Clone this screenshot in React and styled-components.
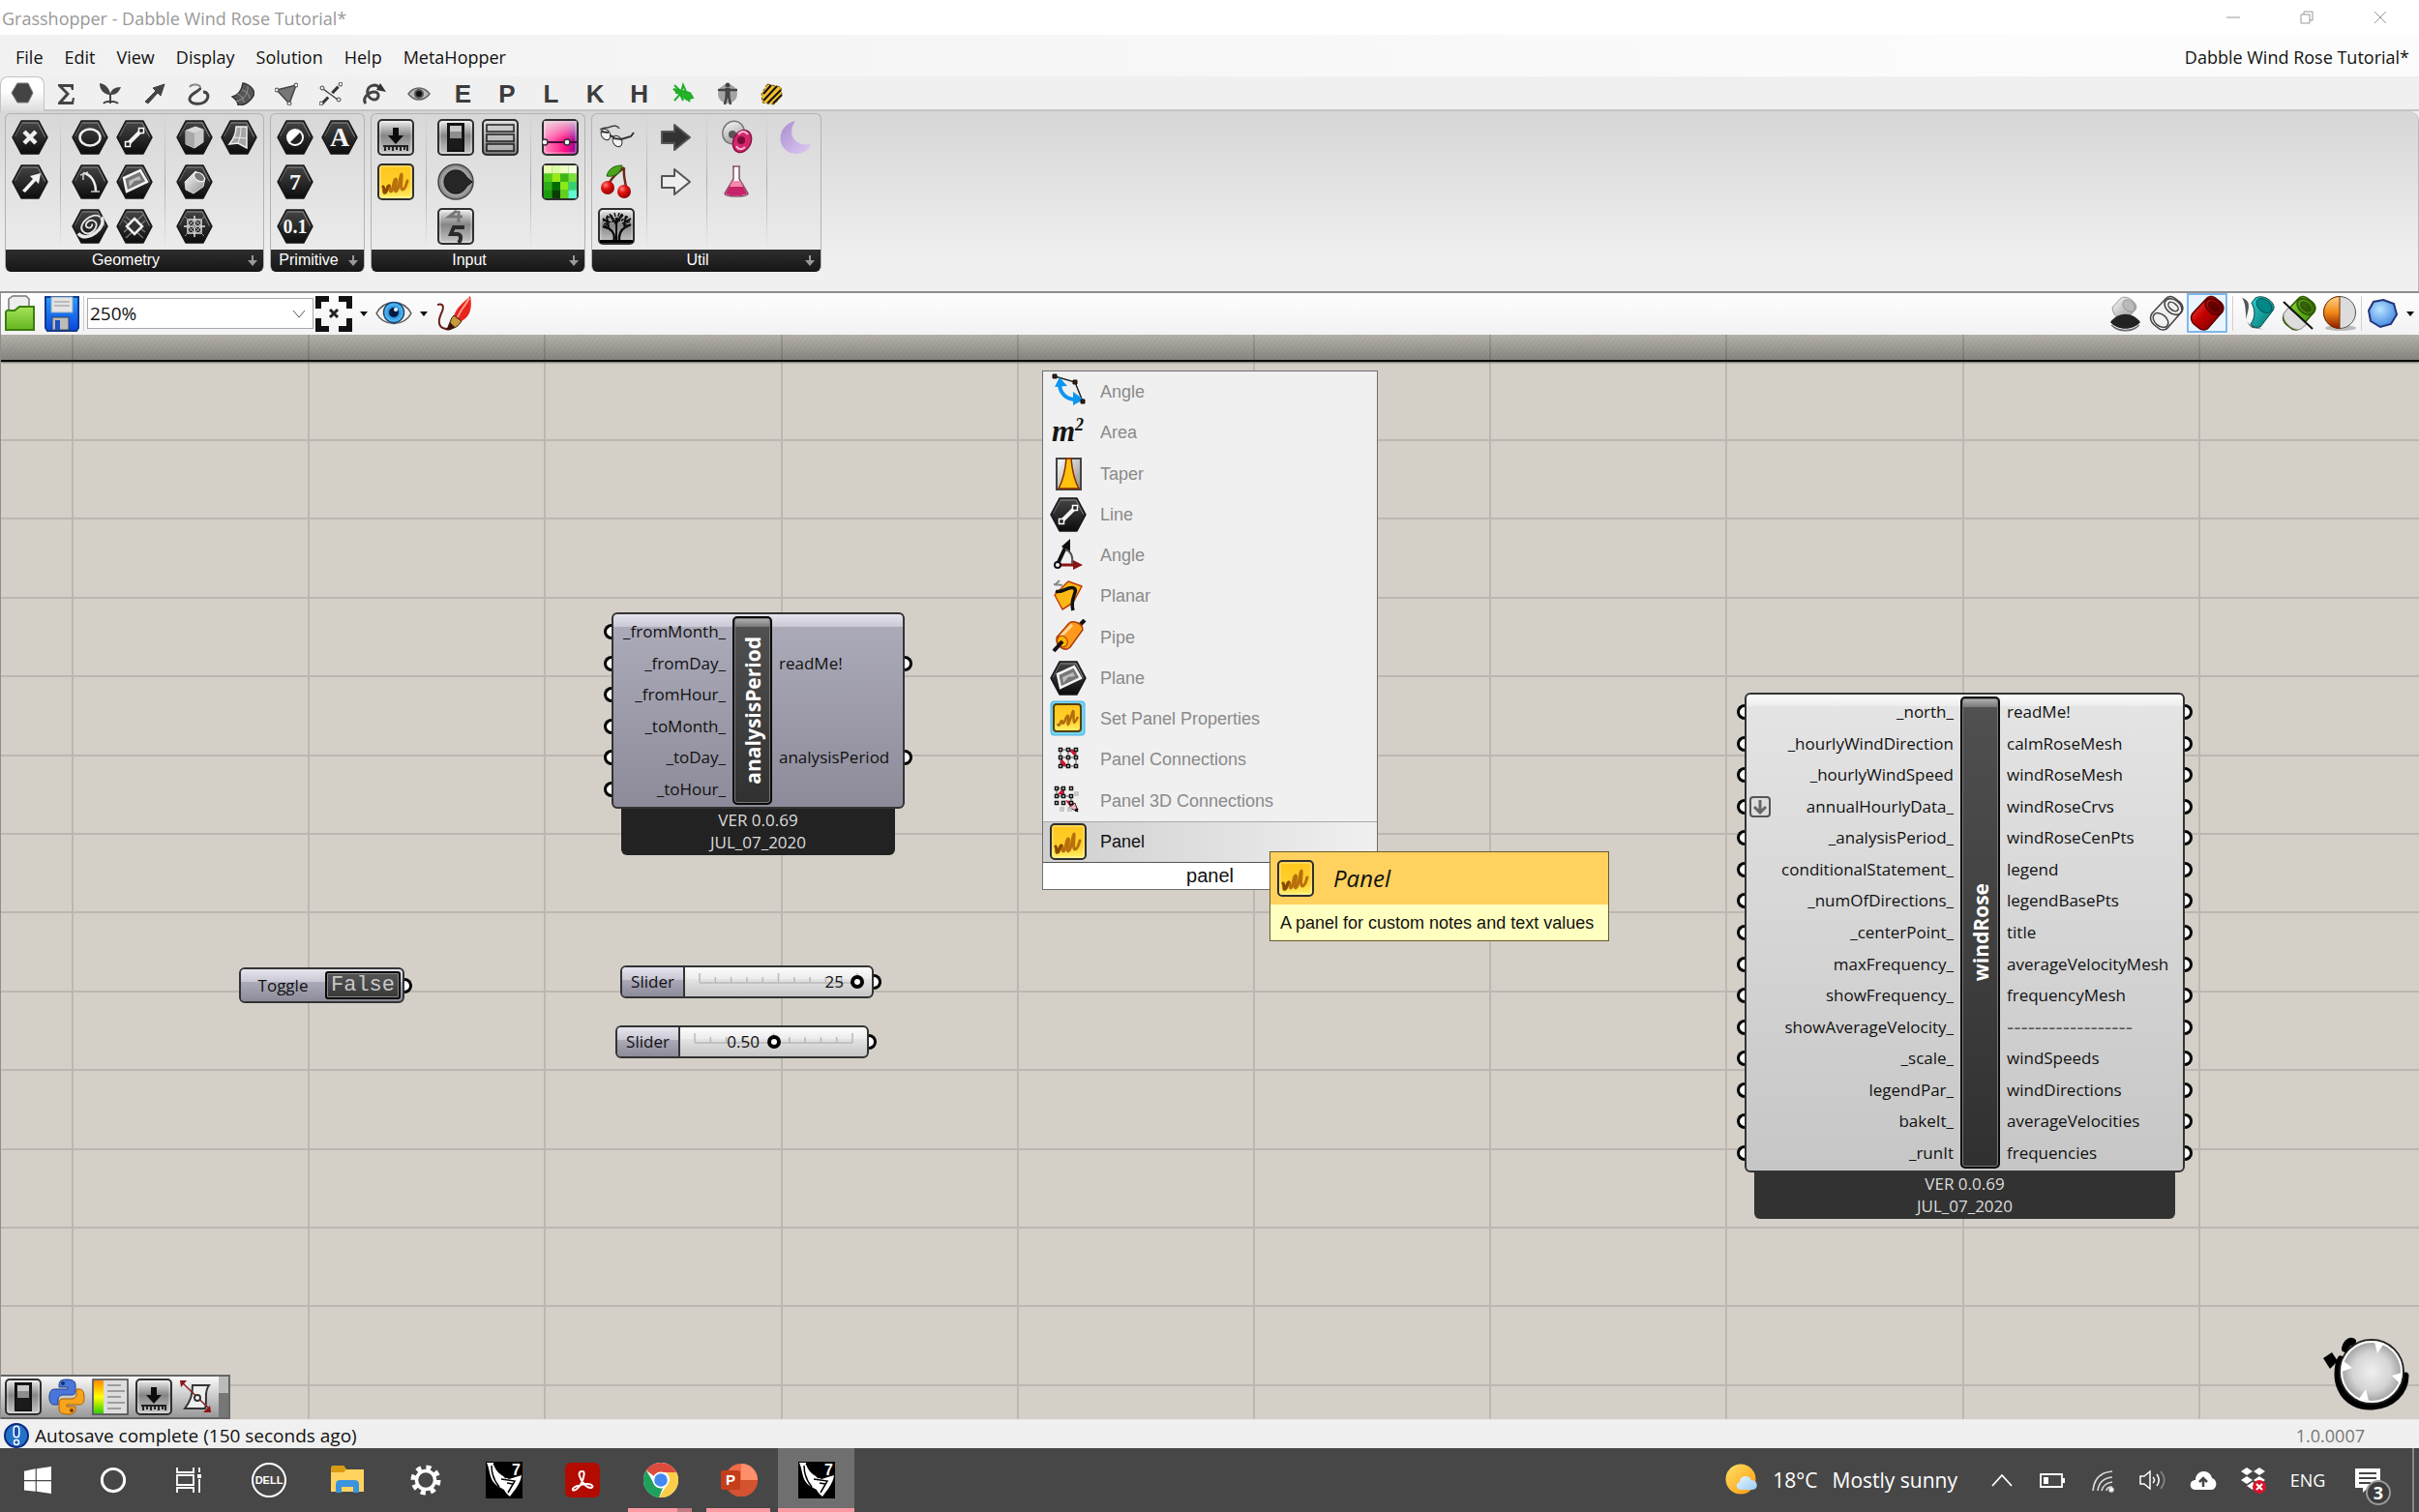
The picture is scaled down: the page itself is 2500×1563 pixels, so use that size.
import { useState } from "react"
import styled, { createGlobalStyle } from "styled-components"

const ui = `"Open Sans", "Noto Sans", sans-serif`
const sans = `"Liberation Sans", Arial, sans-serif`

/* ---------- icons ---------- */

function Svg({ size = 38, box = 38, children }) {
  return (
    <svg width={size} height={size} viewBox={`0 0 ${box} ${box}`} fill="none" aria-hidden="true">
      {children}
    </svg>
  )
}

function Defs() {
  return (
    <svg width="0" height="0" style={{ position: "absolute" }} aria-hidden="true">
      <defs>
        <linearGradient id="hex" x1="0" y1="0" x2="0" y2="1">
          <stop offset="0" stopColor="#454545" />
          <stop offset="0.5" stopColor="#2a2a2a" />
          <stop offset="1" stopColor="#0c0c0c" />
        </linearGradient>
        <linearGradient id="steel" x1="0" y1="0" x2="0" y2="1">
          <stop offset="0" stopColor="#f2f2f2" />
          <stop offset="0.45" stopColor="#858585" />
          <stop offset="1" stopColor="#c9c9c9" />
        </linearGradient>
        <linearGradient id="dim" x1="0" y1="0" x2="0" y2="1">
          <stop offset="0" stopColor="#dcdcdc" />
          <stop offset="1" stopColor="#4c4c4c" />
        </linearGradient>
        <linearGradient id="grey" x1="0" y1="0" x2="1" y2="1">
          <stop offset="0" stopColor="#ffffff" />
          <stop offset="1" stopColor="#8d8d8d" />
        </linearGradient>
        <linearGradient id="gold" x1="0" y1="0" x2="0" y2="1">
          <stop offset="0" stopColor="#ffc61c" />
          <stop offset="0.6" stopColor="#ffd02c" />
          <stop offset="1" stopColor="#fff16a" />
        </linearGradient>
        <linearGradient id="pink" x1="0" y1="0" x2="1" y2="0">
          <stop offset="0" stopColor="#ff8fc0" />
          <stop offset="0.65" stopColor="#ff0f83" />
          <stop offset="1" stopColor="#7a0a9a" />
        </linearGradient>
        <linearGradient id="shine" x1="0" y1="0" x2="0" y2="1">
          <stop offset="0" stopColor="#e6e6e6" stopOpacity="0.8" />
          <stop offset="1" stopColor="#fff" stopOpacity="0" />
        </linearGradient>
        <linearGradient id="moon" x1="0" y1="0" x2="1" y2="1">
          <stop offset="0" stopColor="#a98fd0" />
          <stop offset="1" stopColor="#dfcaf3" />
        </linearGradient>
        <linearGradient id="folder" x1="0" y1="0" x2="0" y2="1">
          <stop offset="0" stopColor="#a6e45a" />
          <stop offset="1" stopColor="#63b51e" />
        </linearGradient>
        <linearGradient id="disk" x1="0" y1="0" x2="0" y2="1">
          <stop offset="0" stopColor="#2c9bff" />
          <stop offset="1" stopColor="#0a46e0" />
        </linearGradient>
        <linearGradient id="red" x1="0" y1="0" x2="1" y2="1">
          <stop offset="0" stopColor="#ff5a4a" />
          <stop offset="0.45" stopColor="#c40000" />
          <stop offset="1" stopColor="#6a0000" />
        </linearGradient>
        <linearGradient id="teal" x1="0" y1="0" x2="1" y2="1">
          <stop offset="0" stopColor="#2ad0cc" />
          <stop offset="1" stopColor="#05706f" />
        </linearGradient>
        <linearGradient id="green" x1="0" y1="0" x2="1" y2="1">
          <stop offset="0" stopColor="#a0e83c" />
          <stop offset="1" stopColor="#2d7d00" />
        </linearGradient>
        <linearGradient id="orange" x1="0" y1="0" x2="0" y2="1">
          <stop offset="0" stopColor="#ffd28a" />
          <stop offset="0.5" stopColor="#f08a14" />
          <stop offset="1" stopColor="#8a1a00" />
        </linearGradient>
        <linearGradient id="legend" x1="0" y1="0" x2="0" y2="1">
          <stop offset="0" stopColor="#ff8a00" />
          <stop offset="0.5" stopColor="#ffff00" />
          <stop offset="1" stopColor="#34d000" />
        </linearGradient>
        <linearGradient id="sun" x1="0" y1="0" x2="1" y2="1">
          <stop offset="0" stopColor="#ffe067" />
          <stop offset="1" stopColor="#ff9a0c" />
        </linearGradient>
        <linearGradient id="cloud" x1="0" y1="0" x2="1" y2="1">
          <stop offset="0" stopColor="#e9f6ff" />
          <stop offset="1" stopColor="#9ccbf3" />
        </linearGradient>
        <radialGradient id="gem" cx="0.4" cy="0.35" r="0.7">
          <stop offset="0" stopColor="#b8e4ff" />
          <stop offset="1" stopColor="#3f83e2" />
        </radialGradient>
        <radialGradient id="iris">
          <stop offset="0.2" stopColor="#0a6fd0" />
          <stop offset="1" stopColor="#63c8f8" />
        </radialGradient>
        <radialGradient id="cherry" cx="0.35" cy="0.3" r="0.8">
          <stop offset="0" stopColor="#ff8080" />
          <stop offset="0.4" stopColor="#e00f0f" />
          <stop offset="1" stopColor="#800000" />
        </radialGradient>
        <radialGradient id="ball">
          <stop offset="0" stopColor="#f0f0f0" />
          <stop offset="0.6" stopColor="#d4d4d4" />
          <stop offset="1" stopColor="#999" />
        </radialGradient>
      </defs>
    </svg>
  )
}

function Hex({ children }) {
  return (
    <Svg>
      <path d="M10 2h18l9 17-9 17H10L1 19z" fill="url(#hex)" stroke="#161616" strokeWidth="1.5" strokeLinejoin="round" />
      <path d="M11 4h16l7.500 14.500" stroke="#8a8a8a" strokeWidth="1" />
      <path d="M11 4L3.500 18" stroke="#666" strokeWidth="1" />
      {children}
    </Svg>
  )
}

function Plate({ fill = "url(#steel)", children }) {
  return (
    <Svg>
      <rect x="1" y="1" width="36" height="36" rx="4" fill={fill} stroke="#2f2f2f" strokeWidth="2" />
      <rect x="3" y="3" width="32" height="32" rx="2" stroke="#fff" strokeOpacity="0.5" />
      {children}
    </Svg>
  )
}

const Point = () => <Hex><path d="M13 13l12 12M25 13L13 25" stroke="#eee" strokeWidth="4.500" /></Hex>
const Vector = () => <Hex><path d="M11 28L22 16l-3-3 11-3-2 11-3-3-11 12z" fill="#f2f2f2" /></Hex>
const Circle = () => <Hex><ellipse cx="19" cy="19" rx="10.500" ry="8.500" stroke="#eee" strokeWidth="2.500" /></Hex>
const Line = () => (
  <Hex>
    <path d="M12 26l14-14" stroke="#f2f2f2" strokeWidth="4" />
    <path d="M9.500 23.500h5v5h-5zM23.500 9.500h5v5h-5z" fill="#222" stroke="#fff" strokeWidth="1.500" />
  </Hex>
)
const Arc = () => (
  <Hex>
    <path d="M12 10c8 1 13 9 13 19" stroke="#eee" strokeWidth="2.500" />
    <path d="M20 29h9M12 10v7M9 12l8-3" stroke="#ccc" strokeWidth="1.500" />
  </Hex>
)
const PlaneIcon = () => (
  <Hex>
    <path d="M8 15l17-8 7 12-21 10z" fill="#777" stroke="#f4f4f4" strokeWidth="2.500" />
    <path d="M13 18l11-5 2 4-7 1-5 6z" fill="#bdbdbd" />
  </Hex>
)
const Curve = () => (
  <Hex>
    <g transform="rotate(-35 19 19)" stroke="#e6e6e6" strokeWidth="1.800">
      <path d="M5 18c0 14 29 12 29 0" strokeWidth="3.500" />
      <path d="M33 17c-2-9-24-8-23 2s18 6 16-1-12-4-10 0 6 2 6 0" />
    </g>
  </Hex>
)
const Rectangle = () => (
  <Hex>
    <path d="M8 13l20 18M30 13L10 31M10 9l20 16M28 7L8 25" stroke="#777" strokeWidth="1.500" />
    <path d="M19 11l8 8-8 8-8-8z" fill="#333" stroke="#eee" strokeWidth="2.500" />
  </Hex>
)
const Box = () => (
  <Hex>
    <path d="M10 12l10-4 8 3v13l-9 6-9-4z" fill="#8d8d8d" stroke="#ddd" />
    <path d="M10 12l10-4 8 3-9 4z" fill="#d8d8d8" />
    <path d="M10 12l9 3v15l-9-4z" fill="#a8a8a8" />
    <path d="M19 15l9-4v13l-9 6z" fill="#c8c8c8" />
  </Hex>
)
const Surface = () => (
  <Hex>
    <path d="M16 8h11v22l-9-5-9 1c5-6 7-11 7-18z" fill="#a5a5a5" stroke="#eee" strokeWidth="1.500" />
    <path d="M21 8c0 6-1 12-3 17M13 19l14 1" stroke="#eee" />
  </Hex>
)
const Brep = () => (
  <Hex>
    <path d="M9 19L20 8l10 7-2 9-10 7-8-4z" fill="url(#grey)" stroke="#ddd" />
    <ellipse cx="24" cy="14" rx="6" ry="4" transform="rotate(35 24 14)" fill="#777" stroke="#fff" />
  </Hex>
)
const Mesh = () => (
  <Hex>
    <path d="M12 12h14v14H12zM19 8v22M8 19h22" stroke="#e0e0e0" strokeWidth="1.500" />
    <path d="M9 9l20 20M29 9L9 29" stroke="#999" />
    <path d="M19 12l7 7-7 7-7-7z" stroke="#ccc" />
  </Hex>
)
const Toggle = () => (
  <Hex>
    <circle cx="19" cy="19" r="9" fill="#fff" />
    <path d="M24 14a7 7 0 0 1-10 10z" fill="#222" />
  </Hex>
)
const HexText = ({ children, size = 24 }) => (
  <Hex>
    <text x="19" y={19 + Math.round(size / 3)} textAnchor="middle" fill="#f4f4f4" fontSize={size} fontWeight="700" fontFamily='"Liberation Serif", serif'>
      {children}
    </text>
  </Hex>
)

const Import = () => (
  <Plate>
    <path d="M16 9h6v8h5l-8 9-8-9h5z" fill="#0c0c0c" />
    <path d="M6 28h26M8 28v5M12 28v4M16 28v5M20 28v4M24 28v5M28 28v4M31 28v5" stroke="#222" strokeWidth="2" />
  </Plate>
)
const SliderIcon = () => (
  <Plate>
    <rect x="11" y="5" width="16" height="28" fill="#1a1a1a" stroke="#111" strokeWidth="2" />
    <rect x="13" y="7" width="12" height="13" fill="#c8c8c8" />
    <rect x="13" y="13" width="12" height="7" fill="#8d8d8d" />
  </Plate>
)
const ValueList = () => (
  <Plate fill="url(#dim)">
    {[6, 16, 26].map((y) => (
      <rect key={y} x="5" y={y} width="28" height="7" stroke="#222" strokeWidth="1.500" fill="#d2d2d2" fillOpacity="0.7" />
    ))}
  </Plate>
)
const Knob = () => (
  <Svg>
    <circle cx="19" cy="19" r="18" fill="#8f8f8f" stroke="#444" strokeWidth="1.500" />
    <circle cx="19" cy="19" r="14.500" stroke="#b4b4b4" />
    <path d="M36 19l-6 5a12 12 0 1 1 0-10z" fill="#262626" stroke="#111" />
  </Svg>
)
const Scroller = () => (
  <Plate fill="url(#steel)">
    <path d="M20 3l-8 6h14M22 3v12" stroke="#777" strokeWidth="3" />
    <path d="M28 20H17l-3 7h7c4 1 4 5 1 9" stroke="#2a2a2a" strokeWidth="4" />
  </Plate>
)
const Scribble = () => (
  <Plate fill="url(#gold)">
    <path
      d="M6 24c2 3 0 7 2 6 2 0 2-7 4-7s0 6 2 6c3 0 2-12 5-13 2 0-2 13 0 13 4-1 4-17 6-18 1 1-2 16 1 16s4-6 5-9"
      stroke="#b9700c" strokeWidth="3" strokeLinejoin="round" strokeLinecap="round"
    />
    <path d="M6 24c2 3 0 7 2 6 2 0 2-7 4-7" stroke="#8a4a00" strokeWidth="3" strokeLinecap="round" />
  </Plate>
)
const Gradient = () => (
  <Plate fill="url(#pink)">
    <rect x="2" y="2" width="34" height="20" fill="url(#shine)" />
    <path d="M2 24h34" stroke="#4a0a3a" strokeWidth="2" />
    <circle cx="3" cy="24" r="3" fill="#fff" stroke="#333" strokeWidth="1.500" />
    <circle cx="26" cy="24" r="3" fill="#fff" stroke="#333" strokeWidth="1.500" />
  </Plate>
)
const swatches = [
  "#e9ffb0", "#dcfba6", "#edfcc0", "#f2ffe0", "#4ecb1c", "#9aea16", "#3fb514", "#7be03c",
  "#2fae16", "#056c00", "#8cea1a", "#38d070", "#1a9c0c", "#0a3d00", "#62d01c", "#5ff8d0",
]
const Swatch = () => (
  <Plate fill="#3a3">
    {swatches.map((c, i) => (
      <rect key={i} x={2 + (i % 4) * 8.5} y={2 + Math.floor(i / 4) * 8.5} width="8.500" height="8.500" fill={c} />
    ))}
  </Plate>
)
const Glasses = () => (
  <Svg>
    <path d="M2 11c4-3 7-1 11-3 4-1 7-2 9 2" stroke="#444" strokeWidth="1.500" />
    <ellipse cx="8" cy="16" rx="4.500" ry="6" transform="rotate(-30 8 16)" fill="#f4f4f4" stroke="#333" />
    <ellipse cx="20" cy="23" rx="4.500" ry="6" transform="rotate(-30 20 23)" fill="#f4f4f4" stroke="#333" />
    <path d="M12 17l5 2M24 21l10-3 3-4M3 13l8 1M16 20l9 1" stroke="#333" strokeWidth="2" />
  </Svg>
)
const Cherry = () => (
  <Svg>
    <path d="M27 4c-5 5-13 9-16 18M27 4c-1 8 1 14 2 20" stroke="#6a2a1a" strokeWidth="2.500" />
    <path d="M9 13c2-8 8-11 16-11-2 9-8 12-16 11z" fill="#4aa51a" stroke="#23600a" />
    <circle cx="10" cy="25" r="7" fill="url(#cherry)" />
    <circle cx="27" cy="29" r="7" fill="url(#cherry)" />
  </Svg>
)
const Tree = () => (
  <Plate fill="url(#steel)">
    <path d="M16 35c2-6 1-10-5-14l-6-2M22 35c-1-8 1-12 6-15l6-3" stroke="#0a0a0a" strokeWidth="2.500" />
    <path d="M19 34V10M11 20L9 9M27 19l2-11M19 17l-6-10M19 16l6-10M9 14l-4-3M29 14l5-3" stroke="#0a0a0a" strokeWidth="2" />
    <path
      d="M5 13h6M6 17l7-3M12 6l3 6M9 8l5 3M17 5l2 8M22 5l-3 9M26 7l-4 6M31 9l-7 4M33 14l-8 2M7 20l4-5M31 19l-5-4M14 14l9-1"
      stroke="#111" strokeWidth="1.500" strokeDasharray="4 1"
    />
    <path d="M2 33h34v3H2z" fill="#000" />
  </Plate>
)
const ArrowBlock = ({ fill }) => (
  <Svg><path d="M4 13h13V6l16 13-16 13v-7H4z" fill={fill} stroke="#555" strokeWidth="2" strokeLinejoin="round" /></Svg>
)
const Cells = () => (
  <Svg>
    <ellipse cx="16" cy="14" rx="11" ry="12" transform="rotate(25 16 14)" fill="url(#grey)" stroke="#777" strokeWidth="1.500" />
    <circle cx="15" cy="16" r="4" fill="#555" />
    <ellipse cx="25" cy="23" rx="9" ry="12" transform="rotate(25 25 23)" fill="#d1276d" stroke="#8a1444" strokeWidth="1.500" />
    <circle cx="24" cy="22" r="4" fill="#7a0c38" />
    <path d="M21 16c3-4 7-4 10 0M19 28c2 4 6 4 9 1" stroke="#ffb5d0" strokeWidth="2" />
  </Svg>
)
const Flask = () => (
  <Svg>
    <path d="M15 3h8M16 3v13L7 31c0 4 24 4 24 0l-9-15V3" fill="#fff" stroke="#84506a" strokeWidth="1.500" />
    <path d="M14 20h10l6 11c0 3-22 3-22 0z" fill="#c8226a" />
    <path d="M15 18h8l3 6H12z" fill="#f58aab" />
  </Svg>
)
const Moon = () => (
  <Svg><path d="M18 2C1 5-3 27 11 34c10 5 21 0 23-8-15 3-26-9-16-24z" fill="url(#moon)" /></Svg>
)

/* category tabs, drawn on a 24px box */
const catPaths = [
  <path d="M7 1h11l5 10-5 10H7L1 11z" fill="#444" stroke="#777" />,
  <path d="M4 2h16v6h-2l-1-3H9l7 7-7 8h9l1-4h2l-1 7H4v-2l8-9-8-8z" fill="#444" />,
  <g>
    <path d="M11 21v-8C5 12 1 8 1 1c6 1 10 5 11 11 1-4 4-7 11-7-2 5-5 8-10 8v8z" fill="#444" />
    <path d="M5 22c2-3 12-3 15 0M12 13v9" stroke="#444" strokeWidth="2" />
  </g>,
  <path d="M3 20L14 9l-3-3 12-4-4 12-3-3L6 22z" fill="#444" stroke="#444" />,
  <g>
    <path d="M3 5c2-4 12-3 11 1" stroke="#888" strokeWidth="2" />
    <path d="M14 6c-1 4-12 6-11 12 1 5 12 6 17 1 4-5 1-9-3-9" stroke="#444" strokeWidth="3" />
  </g>,
  <g>
    <path d="M12 1c7 1 11 6 12 11-3 6-8 12-17 12 0-4-3-7-6-9 7-2 10-7 11-14z" fill="#555" stroke="#333" strokeWidth="1.500" />
    <path d="M6 12c4 1 6 4 7 9M11 8c4 1 8 5 8 9M17 4c1 6-3 14-12 16" stroke="#999" />
  </g>,
  <g>
    <path d="M2 8l20-5-7 19z" fill="#777" stroke="#444" strokeWidth="1.500" />
    <circle cx="2" cy="8" r="2" fill="#eee" stroke="#444" /><circle cx="22" cy="3" r="2" fill="#eee" stroke="#444" />
    <circle cx="15" cy="22" r="2" fill="#eee" stroke="#444" />
  </g>,
  <g>
    <path d="M3 22L22 2" stroke="#333" strokeWidth="3" strokeDasharray="9 6" />
    <path d="M4 7l15 11" stroke="#444" strokeWidth="1.500" />
    <circle cx="3" cy="6" r="2" fill="#eee" stroke="#444" /><circle cx="22" cy="2" r="2" fill="#eee" stroke="#444" />
    <circle cx="2" cy="22" r="2" fill="#eee" stroke="#444" /><circle cx="20" cy="18" r="2" fill="#eee" stroke="#444" />
  </g>,
  <g>
    <path d="M3 22c-4-5 2-12 9-12 6 0 5 9-1 8C4 17 1 4 12 3c3 0 4 1 5 3" stroke="#444" strokeWidth="3" />
    <path d="M14 8l4-7 6 9z" fill="#333" />
  </g>,
  <g>
    <path d="M1 12c6-8 16-8 22 0-6 8-16 8-22 0z" fill="#bbb" stroke="#666" strokeWidth="1.500" />
    <circle cx="12" cy="12" r="5" fill="#555" /><circle cx="12" cy="12" r="3" fill="#111" />
  </g>,
]
const catNames = ["Params", "Maths", "Sets", "Vector", "Curve", "Surface", "Mesh", "Intersect", "Transform", "Display"]
const letterTabs = ["E", "P", "L", "K", "H"]
const pluginTabs = [
  <g stroke="#1fae28" strokeWidth="2">
    <path d="M2 7l9 2 8 2 3 5-6 2-7-5z" fill="#28b428" />
    <path d="M3 3l7 7 2-7 4 9M3 19l6-7 3 7M16 17l3 3M4 11h6" />
  </g>,
  <g>
    <circle cx="12" cy="12" r="10" fill="#a4a4a4" />
    <circle cx="12" cy="3" r="2.500" fill="#444" />
    <path d="M2 8h20" stroke="#444" strokeWidth="2.500" /><path d="M12 6v9" stroke="#444" strokeWidth="5" />
    <path d="M11 14l-2 9M13 14l2 9" stroke="#444" strokeWidth="2.500" />
  </g>,
  <g>
    <path d="M8 2l14 3 1 9-8 9-12-2-1-9z" fill="#f0bd2e" />
    <path d="M4 12l8-9M4 19L18 4M8 22L22 8M14 22l9-9" stroke="#111" strokeWidth="2" />
    <path d="M8 2l14 3 1 9-8 9-12-2-1-9z" stroke="#6a5210" strokeDasharray="3 2" />
  </g>,
]

/* file toolbar */
const OpenIcon = () => (
  <Svg>
    <path d="M6 22V4l4-3h14l3 3v18z" fill="#eee" stroke="#777" strokeWidth="1.500" />
    <path d="M3 18c0-3 3-2 9-2l5-4h15v24H3z" fill="url(#folder)" stroke="#3c7d10" strokeWidth="2" />
  </Svg>
)
const SaveIcon = () => (
  <Svg>
    <path d="M2 2h34v32l-2 3H4l-2-3z" fill="url(#disk)" stroke="#123a8a" strokeWidth="2" />
    <rect x="8" y="2" width="22" height="16" fill="#e4e4e4" stroke="#8ab" />
    <path d="M11 7h16M11 11h16" stroke="#bbb" strokeWidth="2" />
    <rect x="9" y="23" width="17" height="13" fill="#bbb" stroke="#345" />
    <rect x="12" y="26" width="5" height="10" fill="#1c4fc0" />
  </Svg>
)
const ExtentsIcon = () => (
  <Svg>
    <path d="M3 14V4h11M24 4h11v10M35 24v11H24M14 35H3V24" stroke="#111" strokeWidth="6" />
    <path d="M15 15l8 8M23 15l-8 8" stroke="#222" strokeWidth="3" />
  </Svg>
)
const EyeIcon = () => (
  <Svg>
    <path d="M1 19C9 4 29 4 37 19 29 33 9 33 1 19z" fill="#f6f2ea" stroke="#555" strokeWidth="1.500" />
    <circle cx="19" cy="18" r="10.500" fill="url(#iris)" stroke="#1a4a80" strokeWidth="1.500" />
    <circle cx="19" cy="18" r="5" fill="#061a40" /><circle cx="21" cy="15" r="2" fill="#fff" />
  </Svg>
)
const BrushIcon = () => (
  <Svg>
    <path d="M2 10c7-2 7 3 4 9-4 9-3 16 7 16" stroke="#6a2018" strokeWidth="2" />
    <path d="M36 1c2 10 1 21-9 26l-8-5C22 12 29 8 36 1z" fill="#e8251c" />
    <path d="M35 3c-4 8-9 12-12 20" stroke="#ff9a8a" strokeWidth="2" />
    <path d="M19 21l8 6c-3 5-7 8-14 8 2-5 2-10 6-14z" fill="#c79a3a" stroke="#3a1a0a" />
    <path d="M10 36c3-1 3-6 5-8l5 5c-3 3-6 4-10 3z" fill="#3a1208" />
  </Svg>
)
function Tube({ fill, stroke, wire }) {
  return (
    <g stroke={stroke} strokeWidth="1.500">
      <path d="M4 19L18 4c3-4 8-3 12 1 6 4 7 8 5 12L21 33c-3 4-8 4-12 0-6-4-8-9-5-14z" fill={fill} />
      <ellipse cx="26" cy="12" rx="10" ry="7" transform="rotate(40 26 12)" fill={wire ? "none" : "#000"} fillOpacity="0.250" />
      <ellipse cx="26" cy="12" rx="6" ry="3.500" transform="rotate(40 26 12)" fill={wire ? "none" : "#000"} fillOpacity="0.300" />
      {wire && <ellipse cx="13" cy="26" rx="9" ry="6" transform="rotate(40 13 26)" />}
    </g>
  )
}
const HiddenIcon = () => (
  <Svg>
    <path d="M5 13l8-9c3-3 8-2 12 1s6 7 4 10l-8 9c-8 2-15-1-16-11z" fill="url(#grey)" stroke="#999" />
    <ellipse cx="22" cy="11" rx="7" ry="5" transform="rotate(40 22 11)" fill="#bbb" stroke="#999" />
    <path d="M3 28c8-11 23-11 31 0-7 9-24 9-31 0z" fill="#222" />
    <path d="M4 31c8 7 21 7 29 0-6 8-23 8-29 0z" fill="#eee" stroke="#555" />
  </Svg>
)
const HalfBall = () => (
  <Svg>
    <ellipse cx="20" cy="34" rx="16" ry="3" fill="#bbb" />
    <circle cx="19" cy="18" r="16.500" fill="#dcdcdc" stroke="#555" />
    <path d="M19 1.500v33a16.500 16.500 0 0 1 0-33z" fill="url(#orange)" stroke="#7a2a00" />
  </Svg>
)
const Gem = () => (
  <Svg>
    <path d="M19 5l11 4 3 11-6 10-11 3-10-6-2-11 5-9z" fill="url(#gem)" stroke="#22347c" strokeWidth="2" />
  </Svg>
)

/* canvas search popup */
const AngleArc = () => (
  <Svg>
    <path d="M5 3l21 6 8 20" stroke="#222" strokeWidth="1.500" />
    <path d="M10 12c1 8 6 14 15 15" stroke="#0d96f2" strokeWidth="4" />
    <path d="M5 14l5-10 8 9zM24 19l11 8-11 6z" fill="#0d96f2" />
    <path d="M3 1h4v4H3zM24 7h4v4h-4zM32 27h4v4h-4z" fill="#3a1a0a" stroke="#111" />
  </Svg>
)
const AreaIcon = () => (
  <Svg>
    <text x="2" y="28" fontSize="31" fontWeight="700" fontStyle="italic" fill="#141414" fontFamily='"Liberation Serif", serif'>m</text>
    <text x="26" y="17" fontSize="18" fontWeight="700" fontStyle="italic" fill="#141414" fontFamily='"Liberation Serif", serif'>2</text>
  </Svg>
)
const TaperIcon = () => (
  <Svg>
    <rect x="7" y="3" width="25" height="32" fill="url(#grey)" stroke="#444" strokeWidth="2" />
    <path d="M17 3h5c1 12 3 22 8 31H9c5-9 7-19 8-31z" fill="#ffc20e" stroke="#8a2a00" strokeWidth="1.500" />
  </Svg>
)
const AngleVec = () => (
  <Svg>
    <path d="M8 28L16 11" stroke="#111" strokeWidth="4" /><path d="M12 10l9-8v14z" fill="#111" />
    <path d="M8 29h16" stroke="#8a1414" strokeWidth="3" /><path d="M24 24l10 5-10 5z" fill="#8a1414" />
    <path d="M16 13c6 2 8 8 7 15" stroke="#555" strokeWidth="2" />
    <circle cx="8" cy="29" r="3" fill="#fff" stroke="#111" strokeWidth="2" />
  </Svg>
)
const PlanarIcon = () => (
  <Svg>
    <path d="M5 18L19 4l14 5-9 17-11 7z" fill="#fdb913" stroke="#c03c0c" strokeWidth="1.500" strokeLinejoin="round" />
    <path d="M6 14c7 3 13-6 19-3 5 3-5 10-1 23" stroke="#111" strokeWidth="3.500" />
    <path d="M5 8l5-5M4 7l9 1" stroke="#888" strokeWidth="2" />
  </Svg>
)
const PipeIcon = () => (
  <Svg>
    <path d="M28 9l8-8" stroke="#111" strokeWidth="4" />
    <path d="M7 19L20 4c4-3 14 0 14 7L21 29c-5 5-15 0-14-10z" fill="#fd9a1c" stroke="#b03a0a" strokeWidth="1.500" />
    <path d="M11 18L23 6" stroke="#ffd99a" strokeWidth="3" />
    <ellipse cx="13" cy="23" rx="5" ry="6" transform="rotate(-30 13 23)" fill="#ffb400" stroke="#a83a0a" />
    <path d="M4 33l9-10" stroke="#111" strokeWidth="4" />
  </Svg>
)
const PanelProps = () => (
  <Svg>
    <rect x="1" y="1" width="35" height="35" rx="3" fill="#74d3f6" stroke="#49b4dd" />
    <rect x="4" y="4" width="28" height="28" rx="3" fill="url(#gold)" stroke="#55400a" strokeWidth="2" />
    <path d="M8 24c1 3 2 2 3-1s2-2 2 0 2 0 3-3 3-6 3-3-1 8 0 8 4-13 5-14 0 12 1 12 3-4 4-6" stroke="#b06c0c" strokeWidth="2.500" />
  </Svg>
)
const dots = [[11, 9], [19, 9], [27, 9], [11, 17], [19, 17], [27, 17], [11, 26], [19, 26], [27, 26]]
const Connections = () => (
  <Svg>
    <path d="M19 9l8 8v-8M11 17l8 9h-8z" fill="#d8142c" />
    <path d="M11 9h16v17H11zM19 9v17M11 17h16" stroke="#555" />
    {dots.map(([x, y]) => <rect key={x + "-" + y} x={x - 1.5} y={y - 1.5} width="3" height="3" fill="#fff" stroke="#111" strokeWidth="1.500" />)}
  </Svg>
)
const dots3d = [[7, 6], [14, 6], [22, 6], [7, 14], [14, 14], [22, 14], [7, 21], [14, 21], [22, 21]]
const Connections3D = () => (
  <Svg>
    <path d="M8 12l7-8v9zM16 18l8 2 6 8-9-3z" fill="#d8142c" />
    <path d="M20 26l9 4-3-9z" fill="#f5b5bd" stroke="#333" />
    <path d="M7 6h7v8H7zM14 14h8v7" stroke="#555" />
    {dots3d.map(([x, y]) => (
      <rect key={x + "-" + y} x={x - 1.5} y={y - 1.5} width="3" height="3" fill="#fff" stroke="#111" strokeWidth="1.500" />
    ))}
    <path d="M26 10h3v3h-3zM11 26h3v3h-3zM19 26h3v3h-3z" stroke="#bbb" strokeWidth="1.500" />
    <path d="M26 27h3v3h-3z" fill="#111" />
  </Svg>
)

/* docked canvas buttons */
const Python = () => (
  <Svg>
    <path d="M19 1c-8 0-8 3-8 8h9v2H7c-5 0-6 4-6 8s1 8 5 8h4v-5c0-3 2-5 5-5h9c3 0 4-2 4-4V7c0-5-4-6-9-6z" fill="#4a76dc" stroke="#20408c" />
    <path d="M20 37c8 0 8-3 8-8h-9v-2h13c5 0 5-4 5-8s-1-8-5-8h-3v5c0 3-2 5-5 5h-9c-3 0-4 2-4 4v6c0 5 4 6 9 6z" fill="#f7a51c" stroke="#a85e04" />
    <circle cx="15" cy="5" r="2" fill="#16306a" /><circle cx="24" cy="33" r="2" fill="#7a3a00" />
  </Svg>
)
const LegendIcon = () => (
  <Svg>
    <rect x="1" y="1" width="36" height="36" fill="#ddd" stroke="#444" strokeWidth="1.500" />
    <rect x="2" y="2" width="10" height="34" fill="url(#legend)" />
    <path d="M16 7h14M16 13h18M16 19h14M16 25h18M16 31h14" stroke="#888" strokeWidth="1.500" />
  </Svg>
)
const Flow = () => (
  <Svg>
    <path d="M14 7h17c-6 8-1 14-4 24H6c6-8 8-14 8-24z" fill="#eee" stroke="#333" strokeWidth="2" />
    <path d="M3 4l29 28" stroke="#8a2020" strokeWidth="1.500" />
    <path d="M1 2h7L2 9zM33 35h-8l7-7z" fill="#8a1414" />
    <circle cx="19" cy="20" r="3" fill="#fff" stroke="#333" strokeWidth="2" />
  </Svg>
)

/* taskbar */
const Windows = () => (
  <Svg size={28} box={24}><path d="M0 4l10-2v10H0zM11 2l13-2v12H11zM0 13h10v9L0 21zM11 13h13v11l-13-2z" fill="#fff" /></Svg>
)
const Cortana = () => <Svg size={28} box={24}><circle cx="12" cy="12" r="10" stroke="#fff" strokeWidth="2.500" /></Svg>
const TaskView = () => (
  <Svg size={28} box={28}>
    <path d="M2 1v5h17V1M2 27v-5h17v5M2 9h17v10H2zM25 1v5M25 13v14" stroke="#fff" strokeWidth="1.800" />
    <rect x="23" y="8" width="4" height="4" fill="#fff" />
  </Svg>
)
const Dell = () => (
  <Svg size={38}>
    <circle cx="19" cy="19" r="17" stroke="#fff" strokeWidth="2" />
    <text x="19" y="23" textAnchor="middle" fontSize="11" fontWeight="700" fill="#fff" fontFamily="Liberation Sans, sans-serif">DELL</text>
  </Svg>
)
const Explorer = () => (
  <Svg size={36} box={36}>
    <path d="M1 5l2-2h11l3 4h18v23H1z" fill="#ffd45e" /><path d="M1 5l2-2h11l3 4-3 3H1z" fill="#d99b12" />
    <path d="M6 31V22c0-3 2-4 4-4h16c2 0 4 1 4 4v9h-6v-6H12v6z" fill="#3a94dd" />
  </Svg>
)
const Gear = () => (
  <Svg size={32} box={32}>
    <circle cx="16" cy="16" r="13" stroke="#fff" strokeWidth="5" strokeDasharray="5.100 5.110" />
    <circle cx="16" cy="16" r="9.500" stroke="#fff" strokeWidth="3.500" />
  </Svg>
)
const Rhino = () => (
  <Svg size={38}>
    <path d="M0 0h38v38H0z" fill="#000" />
    <path d="M1 1h7c1 8 7 13 16 17l13-4c-1 8-6 14-12 22-3-2-5-5-6-7l-7-4C3 19 5 9 1 1z" fill="#fff" />
    <path d="M8 2l13 15M6 4c0 9 3 16 8 22M16 18l14 2-7 12M22 22l6 1" stroke="#000" strokeWidth="1.500" />
    <path d="M2 28l12 3 8 6H2z" fill="#000" />
    <text x="27" y="14" fontSize="16" fontWeight="700" fill="#fff" fontFamily="Liberation Sans, sans-serif">7</text>
  </Svg>
)
const Acrobat = () => (
  <Svg size={38}>
    <rect x="1" y="1" width="36" height="36" rx="6" fill="#b30b00" />
    <path d="M18 10c4-1 3 5 0 12-3 6-8 9-9 7-1-3 9-6 15-6 5 0 7 3 4 4-4 1-10-6-12-12-1-3 0-5 2-5z" stroke="#fff" strokeWidth="2" />
  </Svg>
)
const Chrome = () => (
  <Svg size={36} box={36}>
    <circle cx="18" cy="18" r="18" fill="#fff" />
    <path d="M18 0a18 18 0 0 1 16 10H18a8 8 0 0 0-7 4L3 8A18 18 0 0 1 18 0z" fill="#dd4b3e" />
    <path d="M3 8l8 14a8 8 0 0 0 9 4l-4 10A18 18 0 0 1 3 8z" fill="#1fa15d" />
    <path d="M34 10a18 18 0 0 1-18 26l9-14a8 8 0 0 0-2-12z" fill="#fccd48" />
    <circle cx="18" cy="18" r="8.500" fill="#fff" /><circle cx="18" cy="18" r="6.800" fill="#4688f1" />
  </Svg>
)
const PowerPoint = () => (
  <Svg size={38}>
    <circle cx="21" cy="19" r="17" fill="#ed6c47" /><path d="M21 2a17 17 0 0 1 17 17H21z" fill="#ff8f6b" />
    <path d="M38 19a17 17 0 0 1-32 8l15-8z" fill="#d35230" />
    <rect x="0" y="9" width="20" height="20" rx="2" fill="#c43e1c" />
    <text x="10" y="24" textAnchor="middle" fontSize="15" fontWeight="700" fill="#fff" fontFamily="Liberation Sans, sans-serif">P</text>
  </Svg>
)
const Weather = () => (
  <Svg size={34} box={34}>
    <circle cx="16" cy="16" r="15.500" fill="url(#sun)" />
    <path d="M16 27c-5 0-6-7-1-8 0-7 10-8 12-2 7 0 8 10 1 10z" fill="url(#cloud)" />
  </Svg>
)
const trayIcons = [
  ["Show hidden icons", <path d="M4 20l10-11 10 11" stroke="#fff" strokeWidth="1.800" />],
  ["Battery", <g><path d="M2 8h22v13H2z" stroke="#fff" strokeWidth="1.800" /><path d="M5 11h5v7H5zM24 12h3v5h-3z" fill="#fff" /></g>],
  ["Network", <g stroke="#ddd" strokeWidth="1.600"><path d="M4 25C5 13 12 6 24 5M9 25c1-9 6-13 15-14M13 25c1-5 5-8 11-9M18 25c0-2 2-4 6-4" /><circle cx="23" cy="24" r="2" fill="#fff" /></g>],
  ["Volume", <g stroke="#fff" strokeWidth="1.500"><path d="M1 10h4l6-5v18l-6-5H1z" /><path d="M14 11c2 2 2 4 0 6M18 8c3 4 3 8 0 12" /><path d="M22 5c5 6 5 12 0 18" stroke="#888" /></g>],
  ["Cloud backup", <g><path d="M6 24c-7 0-7-10 0-10 0-11 15-12 17-2 6 1 6 12-1 12z" fill="#fff" /><path d="M14 21v-8M10 16l4-4 4 4" stroke="#444" strokeWidth="2.500" /></g>],
  ["Dropbox", <g><path d="M7 1l6 4-6 4-6-4zM20 1l6 4-6 4-6-4zM7 10l6 4-6 4-6-4zM20 10l6 4-6 4-6-4zM13 16l5 4-5 4-6-4z" fill="#fff" /><circle cx="20" cy="21" r="7" fill="#d8142c" /><path d="M17 18l6 6M23 18l-6 6" stroke="#fff" strokeWidth="2" /></g>],
]

/* ---------- global + frame ---------- */

const GlobalStyle = createGlobalStyle`
* { box-sizing: border-box; }
body {
  margin: 0;
  font-family: ${ui};
  font-size: 18px;
  color: #111;
}
button {
  margin: 0;
  padding: 0;
  border: 0;
  background: none;
  font: inherit;
  color: inherit;
}
svg { display: block; flex-shrink: 0; }
`

const Window = styled.div`
  display: flex;
  flex-direction: column;
  min-height: 100vh;
  background: #f0f0f0;
`

const TitleBar = styled.header`
  display: flex;
  align-items: center;
  justify-content: space-between;
  height: 36px;
  padding: 0 2px;
  background: #fff;
  color: #999;
`

const WindowTitle = styled.span`
  padding-top: 2px;
`

const WindowButtons = styled.div`
  display: flex;
`

const WindowButton = styled.button`
  display: flex;
  align-items: center;
  justify-content: center;
  width: 76px;
  height: 36px;
`

const MenuBar = styled.nav`
  display: flex;
  align-items: center;
  height: 43px;
  padding: 0 10px 0 5px;
  background: linear-gradient(90deg, #f1f1f1, #fcfcfc 85%);
`

const MenuItem = styled.button`
  padding: 2px 11px 0;
`

const DocumentName = styled.button`
  margin-left: auto;
  padding-top: 2px;
`

const Tabs = styled.div`
  display: flex;
  height: 36px;
  border-bottom: 2px solid #c4c4c4;
`

const TabList = styled.div`
  display: flex;
  width: 820px;
`

const Tab = styled.button`
  display: flex;
  flex: 1;
  align-items: center;
  justify-content: center;
  height: 36px;
  padding-bottom: 2px;
  border: 1px solid ${(p) => (p.$active ? "#c4c4c4" : "transparent")};
  border-bottom: 0;
  border-radius: 8px 8px 0 0;
  background: ${(p) => (p.$active ? "linear-gradient(#fff, #fff 40%, #dcdcdc)" : "none")};
  font: 700 26px/32px ${sans};
  color: #3c3c3c;
`

const Ribbon = styled.section`
  display: flex;
  align-items: flex-start;
  gap: 6px;
  height: 186px;
  padding: 2px 5px;
  background: linear-gradient(#d6d6d6, #f0f0f0 85%);
  border-right: 1px solid #bbb;
  border-radius: 0 10px 0 0;
`

const Group = styled.div`
  display: flex;
  flex-direction: column;
  height: 164px;
  border: 1px solid #b2b2b2;
  border-bottom: 0;
  border-radius: 6px;
  background: linear-gradient(#d8d8d8, #eee);
  overflow: hidden;
`

const GroupBody = styled.div`
  display: flex;
  flex: 1;
  padding: 1px 2px;
`

const Block = styled.div`
  display: grid;
  grid-auto-flow: column;
  grid-template-rows: repeat(3, 46px);
  grid-auto-columns: 46px;

  & + & {
    margin-left: 8px;
    padding-left: 7px;
    border-left: 1px solid;
    border-image: linear-gradient(transparent, #b0b0b0 50%, transparent) 1;
  }
`

const IconButton = styled.button`
  display: flex;
  align-items: center;
  justify-content: center;
`

const GroupLabel = styled.button`
  display: flex;
  align-items: center;
  height: 23px;
  padding: 0 4px 2px 0;
  background: linear-gradient(#2e2e2e, #161616);
  font: 16px/20px ${sans};
  color: #fff;

  span {
    flex: 1;
    text-align: center;
  }
`

/* ---------- canvas toolbar ---------- */

const ToolBar = styled.div`
  display: flex;
  align-items: center;
  height: 45px;
  padding: 0 2px 2px 0;
  border-top: 2px solid #8e8e8e;
  border-left: 1px solid #8e8e8e;
  background: linear-gradient(#fefefe, #f2f2f2);
`

const ToolButton = styled.button`
  display: flex;
  align-items: center;
  justify-content: center;
  width: 42px;
  height: 41px;
  border: 2px solid ${(p) => (p.$active ? "#7eb8ec" : "transparent")};
  background: ${(p) => (p.$active ? "#eaf4fd" : "none")};
`

const Caret = styled.button`
  width: ${(p) => p.$w || 20}px;
  height: 41px;

  &::after {
    content: "";
    display: block;
    width: 0;
    margin: 2px auto 0;
    border: 4px solid transparent;
    border-top: 5px solid #111;
    border-bottom: 0;
  }
`

const Divider = styled.div`
  width: 1px;
  height: 36px;
  margin: 0 ${(p) => p.$gap || 1}px;
  background: #d0d0d0;
`

const ZoomField = styled.div`
  display: grid;
  align-items: center;
  width: 234px;
  height: 32px;
  margin-left: 2px;
  background: #fff;

  select, svg {
    grid-area: 1 / 1;
  }
  select {
    height: 32px;
    padding: 0 2px;
    border: 1px solid #a8a8a8;
    border-radius: 0;
    appearance: none;
    background: none;
    font: 19px ${ui};
    color: #111;
  }
  svg {
    justify-self: end;
    margin-right: 8px;
    pointer-events: none;
  }
`

const ViewTools = styled.div`
  display: flex;
  align-items: center;
  margin-left: auto;
`

/* ---------- canvas ---------- */

const Canvas = styled.main`
  position: relative;
  flex: 1;
  min-height: 1000px;
  overflow: hidden;
  border-left: 1px solid #8e8e8e;
  background-color: #d4d0c8;
  background-image:
    linear-gradient(90deg, #bbb8b1 2px, transparent 2px, transparent 244px, #bbb8b1 244px, #bbb8b1 246px, transparent 246px, transparent 488px, #bbb8b1 488px, #bbb8b1 490px, transparent 490px, transparent 733px, #bbb8b1 733px, #bbb8b1 735px, transparent 735px, transparent 977px, #bbb8b1 977px, #bbb8b1 979px, transparent 979px),
    linear-gradient(#bbb8b1 2px, transparent 2px, transparent 81px, #bbb8b1 81px, #bbb8b1 83px, transparent 83px, transparent 163px, #bbb8b1 163px, #bbb8b1 165px, transparent 165px, transparent 244px, #bbb8b1 244px, #bbb8b1 246px, transparent 246px, transparent 326px, #bbb8b1 326px, #bbb8b1 328px, transparent 328px);
  background-size: 1221px 100%, 100% 407px;
  background-position: 73px 0, 0 108px;
`

const Strip = styled.div`
  height: 28px;
  border-bottom: 2px solid #0c0c0c;
  background:
    repeating-linear-gradient(125deg, rgba(0, 0, 0, 0.03) 0 2px, transparent 2px 4px),
    linear-gradient(rgba(0, 0, 0, 0.14), rgba(0, 0, 0, 0.36));
  box-shadow: 0 1px 2px rgba(0, 0, 0, 0.4);
`

const Node = styled.article`
  position: absolute;
  left: ${(p) => p.$x}px;
  top: ${(p) => p.$y}px;
  width: ${(p) => p.$w}px;
  font-size: 17px;
  line-height: 24px;
`

const violet = "linear-gradient(#e6e5ee, #c8c7d3 13px, #abaab9 13px, #8d8b99)"
const silver = "linear-gradient(#fdfdfd, #ececec 12px, #e4e4e4 12px, #c6c6c6)"

const Body = styled.div`
  position: relative;
  display: flex;
  height: ${(p) => p.$h}px;
  padding: 2px 0;
  border: 2px solid #333;
  border-radius: 6px;
  background: ${(p) => (p.$violet ? violet : silver)};
`

const Params = styled.ul`
  display: flex;
  flex: ${(p) => (p.$side === "in" ? "none" : 1)};
  flex-direction: column;
  width: ${(p) => (p.$w ? p.$w + "px" : "auto")};
  margin: 0;
  padding: 0 7px;
  list-style: none;
  text-align: ${(p) => (p.$side === "in" ? "right" : "left")};
`

const Param = styled.li`
  position: relative;
  display: flex;
  flex: 1;
  align-items: center;
  justify-content: ${(p) => (p.$side === "in" ? "flex-end" : "flex-start")};
  margin: 0 -7px;
  padding: 0 7px;
  color: ${(p) => (p.$rule ? "#555" : "#111")};
  font: ${(p) => (p.$rule ? `20px/24px "DejaVu Sans", sans-serif` : "inherit")};
`

const Port = styled.i`
  position: absolute;
  top: calc(50% - 8px);
  ${(p) => (p.$side === "in" ? "left" : "right")}: -10px;
  width: 8px;
  height: 16px;
  border: 3px solid #000;
  border-${(p) => (p.$side === "in" ? "right" : "left")}: 0;
  border-radius: ${(p) => (p.$side === "in" ? "8px 0 0 8px" : "0 8px 8px 0")};
  background: #fff;
`

const NameBar = styled.div`
  display: flex;
  align-items: center;
  justify-content: center;
  width: 41px;
  border: 2px solid #0a0a0a;
  border-radius: 5px;
  background: linear-gradient(#b5b5b5, #777 9px, #505050 9px, #303030);
  box-shadow: inset 0 0 0 1px #777;
  font-size: 21px;
  font-weight: 700;
  color: #fff;

  span {
    writing-mode: vertical-rl;
    transform: rotate(180deg);
  }
`

const Version = styled.footer`
  margin: 0 10px;
  padding-bottom: 2px;
  border-radius: 0 0 6px 6px;
  background: ${(p) => p.$bg};
  line-height: 23px;
  text-align: center;
  color: #dcdcdc;
`

const Principal = styled.span`
  display: flex;
  align-items: center;
  justify-content: center;
  width: 22px;
  height: 22px;
  margin: 0 auto 0 -4px;
  border: 2px solid #555;
  border-radius: 4px;
  background: #ddd;
`

const NodeLabel = styled.label`
  display: flex;
  align-items: center;
  justify-content: center;
  width: ${(p) => p.$w}px;
  margin: -2px 0;
  border-right: ${(p) => (p.$line ? "2px solid #333" : "0")};
  border-radius: 4px 0 0 4px;
  background: ${violet};
`

const ToggleButton = styled.button`
  margin: 0 2px 0 auto;
  padding: 0 4px;
  border: 2px solid #0a0a0a;
  border-radius: 3px;
  background: linear-gradient(#555, #383838);
  box-shadow: inset 0 0 0 1px #888;
  font: 22px/22px "Liberation Mono", monospace;
  color: #c8c8c8;
`

const Track = styled.div`
  position: relative;
  display: grid;
  flex: 1;
  align-items: center;
  padding: 0 8px;

  svg, input {
    grid-area: 1 / 1;
  }
  svg {
    width: 100%;
  }
  input {
    position: relative;
    width: 100%;
    margin: 0;
    appearance: none;
    background: none;
  }
  input::-webkit-slider-thumb {
    appearance: none;
    width: 14px;
    height: 14px;
    border: 4px solid #000;
    border-radius: 50%;
    background: #fff;
  }
`

const Value = styled.output`
  position: absolute;
  right: ${(p) => p.$right}px;
`

/* ---------- search popup ---------- */

const Popup = styled.div`
  position: absolute;
  left: 1076px;
  top: 37px;
  width: 347px;
  border: 1px solid #6e6e6e;
  background: #f0f0f0;
`

const Results = styled.div`
  display: flex;
  flex-direction: column;
  height: 507px;
`

const Result = styled.button`
  display: flex;
  flex: 1;
  align-items: center;
  gap: 14px;
  padding: 0 7px 1px;
  border-top: 1px solid ${(p) => (p.$active ? "#aaa" : "transparent")};
  background: ${(p) => (p.$active ? "linear-gradient(90deg, #cfcfcf, #f0f0f0)" : "none")};
  font: 18px/22px ${sans};
  color: ${(p) => (p.$active ? "#111" : "#8a8a8a")};
`

const SearchInput = styled.input`
  display: block;
  width: 100%;
  height: 28px;
  padding: 0;
  border: 0;
  border-top: 1px solid #555;
  outline: 0;
  font: 20px/26px ${sans};
  text-align: center;
  color: #111;
`

const Tooltip = styled.div`
  position: absolute;
  left: 1311px;
  top: 534px;
  width: 351px;
  border: 1px solid #6a5a2a;
  background: #ffffc0;
  font: 18px/22px ${sans};

  header {
    display: flex;
    align-items: center;
    gap: 20px;
    height: 54px;
    padding: 0 7px;
    background: #ffd15e;
    font: italic 24px/30px ${ui};
  }
  p {
    margin: 0;
    padding: 8px 10px 7px;
    white-space: nowrap;
  }
`

/* ---------- dock, compass, bars ---------- */

const Dock = styled.div`
  position: absolute;
  left: 0;
  bottom: 0;
  display: flex;
  height: 46px;
  border: 2px solid #666;
  border-left: 0;
  background: linear-gradient(#fafafa, #999);
`

const DockButton = styled.button`
  display: flex;
  align-items: center;
  justify-content: center;
  width: 45px;
`

const Grip = styled.div`
  width: 10px;
  background: linear-gradient(#bbb 40%, #777 40%);
`

const Compass = styled.div`
  position: absolute;
  right: 9px;
  bottom: 6px;
`

const StatusBar = styled.footer`
  display: flex;
  align-items: center;
  gap: 6px;
  height: 30px;
  padding: 2px 56px 0 4px;
  border-top: 1px solid #e8e8e8;
  background: #f0f0f0;
  font-size: 19px;
`

const BuildNumber = styled.span`
  margin-left: auto;
  font-size: 18px;
  color: #777;
`

const TaskBar = styled.footer`
  display: flex;
  height: 66px;
  background: #474747;
  color: #fff;
`

const Launchers = styled.div`
  display: flex;
  padding-right: ${(p) => p.$end || 0}px;
`

const TaskButton = styled.button`
  display: flex;
  align-items: center;
  justify-content: center;
  width: ${(p) => p.$w || 81}px;
  background: ${(p) => (p.$active ? "#6f6f6f" : "none")};
`

const Running = styled(TaskButton)`
  position: relative;

  &::after {
    content: "";
    position: absolute;
    left: ${(p) => (p.$active ? 0 : 7)}px;
    right: ${(p) => (p.$active ? 0 : 8)}px;
    bottom: 0;
    height: 4px;
    background: ${(p) => (p.$stack ? "linear-gradient(90deg, #ff99a4 78%, #c47a84 78%)" : "#ff99a4")};
  }
`

const Tray = styled.div`
  display: flex;
  align-items: center;
  margin-left: auto;
`

const WeatherButton = styled.button`
  display: flex;
  align-items: center;
  gap: 15px;
  margin-right: 20px;
  font-size: 21px;
`

const TrayButton = styled.button`
  display: flex;
  align-items: center;
  justify-content: center;
  width: 52px;
  height: 66px;
`

const Language = styled(TrayButton)`
  width: 60px;
`

const Notices = styled(TrayButton)`
  position: relative;
  justify-content: flex-start;
  width: 80px;
  margin-right: 5px;
  padding-left: 18px;
  border-right: 2px solid #888;
`

const Count = styled.span`
  position: absolute;
  right: 22px;
  bottom: 7px;
  width: 26px;
  height: 26px;
  border: 2px solid #999;
  border-radius: 50%;
  background: #3c3c3c;
  font: 700 18px/22px ${ui};
  text-align: center;
`

/* ---------- data ---------- */

const groups = [
  ["Geometry", [
    [<Point />, <Vector />, null],
    [<Circle />, <Arc />, <Curve />, <Line />, <PlaneIcon />, <Rectangle />],
    [<Box />, <Brep />, <Mesh />, <Surface />, null, null],
  ]],
  ["Primitive", [
    [<Toggle />, <HexText>7</HexText>, <HexText size={20}>0.1</HexText>, <HexText size={28}>A</HexText>, null, null],
  ]],
  ["Input", [
    [<Import />, <Scribble />, null],
    [<SliderIcon />, <Knob />, <Scroller />, <ValueList />, null, null],
    [<Gradient />, <Swatch />, null],
  ]],
  ["Util", [
    [<Glasses />, <Cherry />, <Tree />],
    [<ArrowBlock fill="#333" />, <ArrowBlock fill="#eee" />, null],
    [<Cells />, <Flask />, null],
    [<Moon />, null, null],
  ]],
]

const menus = ["File", "Edit", "View", "Display", "Solution", "Help", "MetaHopper"]

const results = [
  ["Angle", <AngleArc />],
  ["Area", <AreaIcon />],
  ["Taper", <TaperIcon />],
  ["Line", <Line />],
  ["Angle", <AngleVec />],
  ["Planar", <PlanarIcon />],
  ["Pipe", <PipeIcon />],
  ["Plane", <PlaneIcon />],
  ["Set Panel Properties", <PanelProps />],
  ["Panel Connections", <Connections />],
  ["Panel 3D Connections", <Connections3D />],
  ["Panel", <Scribble />],
]

const period = {
  inputs: ["_fromMonth_", "_fromDay_", "_fromHour_", "_toMonth_", "_toDay_", "_toHour_"],
  outputs: ["readMe!", "analysisPeriod"],
}

const rose = {
  inputs: [
    "_north_", "_hourlyWindDirection", "_hourlyWindSpeed", "annualHourlyData_", "_analysisPeriod_",
    "conditionalStatement_", "_numOfDirections_", "_centerPoint_", "maxFrequency_", "showFrequency_",
    "showAverageVelocity_", "_scale_", "legendPar_", "bakeIt_", "_runIt",
  ],
  outputs: [
    "readMe!", "calmRoseMesh", "windRoseMesh", "windRoseCrvs", "windRoseCenPts", "legend",
    "legendBasePts", "title", "averageVelocityMesh", "frequencyMesh", "------------------",
    "windSpeeds", "windDirections", "averageVelocities", "frequencies",
  ],
}

/* ---------- pieces ---------- */

function RibbonGroup({ name, blocks }) {
  return (
    <Group>
      <GroupBody>
        {blocks.map((icons, i) => (
          <Block key={i}>
            {icons.map((icon, j) => (icon ? <IconButton key={j}>{icon}</IconButton> : <span key={j} />))}
          </Block>
        ))}
      </GroupBody>
      <GroupLabel>
        <span>{name}</span>
        <Svg size={14} box={14}><path d="M6 2h2v5h4l-5 6-5-6h4z" fill="#999" /></Svg>
      </GroupLabel>
    </Group>
  )
}

function Component({ x, y, w, h, inWidth, name, inputs, outputs, violet, principal, footer }) {
  return (
    <Node $x={x} $y={y} $w={w}>
      <Body $h={h} $violet={violet}>
        <Params $side="in" $w={inWidth}>
          {inputs.map((label) => (
            <Param key={label} $side="in">
              <Port $side="in" />
              {label === principal && (
                <Principal><Svg size={16} box={16}><path d="M8 1v12M2 8l6 6 6-6" stroke="#666" strokeWidth="3" /></Svg></Principal>
              )}
              {label}
            </Param>
          ))}
        </Params>
        <NameBar><span>{name}</span></NameBar>
        <Params $side="out">
          {outputs.map((label) => (
            <Param key={label} $side="out" $rule={label.startsWith("--")}>
              {label}
              <Port $side="out" />
            </Param>
          ))}
        </Params>
      </Body>
      <Version $bg={footer}>VER 0.0.69<br />JUL_07_2020</Version>
    </Node>
  )
}

function NumberSlider({ id, x, y, min, max, start, digits }) {
  const [value, setValue] = useState(start)
  const fraction = (value - min) / (max - min)
  return (
    <Node $x={x} $y={y} $w={262}>
      <Body $h={34}>
        <NodeLabel htmlFor={id} $w={65} $line>Slider</NodeLabel>
        <Track>
          <svg height="20" viewBox="0 0 177 20" preserveAspectRatio="none">
            <path d="M7 11h163" stroke="#b8b8b8" strokeWidth="1.500" />
            {Array.from({ length: 11 }, (_, i) => (
              <path key={i} d={`M${7 + i * 16.3} ${i % 5 ? 5 : 1}V11`} stroke="#b8b8b8" strokeWidth="1.500" />
            ))}
          </svg>
          <Value $right={Math.round(29 + (1 - fraction) * 163)}>{value.toFixed(digits)}</Value>
          <input id={id} type="range" min={min} max={max} step={digits ? 0.01 : 1} value={value} onChange={(e) => setValue(Number(e.target.value))} />
        </Track>
        <Port $side="out" />
      </Body>
    </Node>
  )
}

function CompassWidget() {
  return (
    <Compass>
      <svg width="92" height="80" viewBox="0 0 92 80" fill="none" aria-hidden="true">
        <path d="M25 13c1-5 4-8 7-7" stroke="#000" strokeWidth="8" strokeLinecap="round" />
        <path d="M20 24c-4 8-4 22 0 30 6 14 20 20 33 19 20-1 34-15 34-32" stroke="#000" strokeWidth="7" strokeLinecap="round" />
        <path d="M2 23l9-6 6 9-8 8z" fill="#000" />
        <circle cx="52" cy="37" r="33" fill="url(#ball)" stroke="#222" strokeWidth="2" />
        <circle cx="52" cy="37" r="31" stroke="#fff" strokeWidth="2" />
        <path d="M55 6l9 3-6 9zM22 25l10 8-11 4zM82 50l-9-9 10-3zM39 65l7-10 3 12z" fill="#fff" />
      </svg>
    </Compass>
  )
}

function App() {
  const [active, setActive] = useState(0)
  const [toggle, setToggle] = useState(false)
  const [query, setQuery] = useState("panel")

  const tabs = [
    ...catPaths.map((shape, i) => [catNames[i], <Svg size={24} box={24}>{shape}</Svg>]),
    ...letterTabs.map((l) => [l, l]),
    ...pluginTabs.map((shape, i) => ["Plugin " + (i + 1), <Svg size={24} box={24}>{shape}</Svg>]),
  ]

  return (
    <Window>
      <GlobalStyle />
      <Defs />
      <TitleBar>
        <WindowTitle>Grasshopper - Dabble Wind Rose Tutorial*</WindowTitle>
        <WindowButtons>
          <WindowButton aria-label="Minimize"><Svg size={14} box={14}><path d="M0 7h14" stroke="#999" /></Svg></WindowButton>
          <WindowButton aria-label="Restore"><Svg size={14} box={14}><path d="M1 4h9v9H1zM4 4V1h9v9h-3" stroke="#999" /></Svg></WindowButton>
          <WindowButton aria-label="Close"><Svg size={14} box={14}><path d="M1 1l12 12M13 1L1 13" stroke="#999" /></Svg></WindowButton>
        </WindowButtons>
      </TitleBar>

      <MenuBar>
        {menus.map((m) => <MenuItem key={m}>{m}</MenuItem>)}
        <DocumentName>Dabble Wind Rose Tutorial*</DocumentName>
      </MenuBar>

      <Tabs>
        <TabList>
          {tabs.map(([label, content], i) => (
            <Tab key={label} aria-label={label} $active={i === active} onClick={() => setActive(i)}>{content}</Tab>
          ))}
        </TabList>
      </Tabs>

      <Ribbon>
        {groups.map(([name, blocks]) => <RibbonGroup key={name} name={name} blocks={blocks} />)}
      </Ribbon>

      <ToolBar>
        <ToolButton aria-label="Open"><OpenIcon /></ToolButton>
        <ToolButton aria-label="Save"><SaveIcon /></ToolButton>
        <Divider />
        <ZoomField>
          <select aria-label="Zoom"><option>250%</option></select>
          <Svg size={14} box={14}><path d="M1 4l6 7 6-7" stroke="#555" /></Svg>
        </ZoomField>
        <ToolButton aria-label="Zoom extents"><ExtentsIcon /></ToolButton>
        <Caret aria-label="Zoom options" />
        <ToolButton aria-label="Named views"><EyeIcon /></ToolButton>
        <Caret aria-label="View options" />
        <ToolButton aria-label="Sketch"><BrushIcon /></ToolButton>
        <ViewTools>
          <ToolButton aria-label="No preview"><HiddenIcon /></ToolButton>
          <ToolButton aria-label="Wireframe preview"><Svg><Tube fill="#f0f0f0" stroke="#444" wire /></Svg></ToolButton>
          <ToolButton aria-label="Shaded preview" $active><Svg><Tube fill="url(#red)" stroke="#5a0000" /></Svg></ToolButton>
          <Divider $gap={5} />
          <ToolButton aria-label="Document preview">
            <Svg>
              <path d="M2 3c10 3 7 11 5 19s6 12 22 14l-16-2C2 28 9 12 2 3z" fill="#555" />
              <path d="M12 8l4-5c9-5 23 6 18 13L21 33c-4 1-8 0-10-3 5-7 5-14 1-22z" fill="url(#teal)" stroke="#054a4a" />
              <ellipse cx="25" cy="11" rx="9" ry="6" transform="rotate(40 25 11)" fill="#088" stroke="#055" />
            </Svg>
          </ToolButton>
          <ToolButton aria-label="Selected preview">
            <Svg>
              <Tube fill="url(#green)" stroke="#2a5a00" />
              <path d="M8 13l19 17-6 5C12 39-1 24 4 18z" fill="#ddd" stroke="#888" />
              <path d="M3 7l30 28" stroke="#111" strokeWidth="2" />
            </Svg>
          </ToolButton>
          <ToolButton aria-label="Preview colours"><HalfBall /></ToolButton>
          <Divider />
          <ToolButton aria-label="Mesh quality"><Gem /></ToolButton>
          <Caret $w={14} aria-label="Mesh options" />
        </ViewTools>
      </ToolBar>

      <Canvas>
        <Strip />

        <Component x={631} y={287} w={303} h={203} inWidth={123} name="analysisPeriod" violet footer="#222" {...period} />
        <Component x={1802} y={370} w={455} h={496} inWidth={221} name="windRose" principal="annualHourlyData_" footer="#323232" {...rose} />

        <Node $x={246} $y={654} $w={171}>
          <Body $h={37} $violet>
            <NodeLabel htmlFor="toggle" $w={88}>Toggle</NodeLabel>
            <ToggleButton id="toggle" onClick={() => setToggle(!toggle)}>{toggle ? "True" : "False"}</ToggleButton>
            <Port $side="out" />
          </Body>
        </Node>

        <NumberSlider id="slider-a" x={640} y={652} min={0} max={25} start={25} digits={0} />
        <NumberSlider id="slider-b" x={635} y={714} min={0} max={1} start={0.5} digits={2} />

        <Popup>
          <Results>
            {results.map(([label, icon], i) => (
              <Result key={i} $active={i === results.length - 1}>{icon}{label}</Result>
            ))}
          </Results>
          <SearchInput aria-label="Search components" value={query} onChange={(e) => setQuery(e.target.value)} />
        </Popup>

        <Tooltip>
          <header><Scribble />Panel</header>
          <p>A panel for custom notes and text values</p>
        </Tooltip>

        <Dock>
          <DockButton aria-label="Number slider"><SliderIcon /></DockButton>
          <DockButton aria-label="Python script"><Python /></DockButton>
          <DockButton aria-label="Legend"><LegendIcon /></DockButton>
          <DockButton aria-label="Import"><Import /></DockButton>
          <DockButton aria-label="Data flow"><Flow /></DockButton>
          <Grip />
        </Dock>
        <CompassWidget />
      </Canvas>

      <StatusBar>
        <Svg size={26} box={26}>
          <circle cx="13" cy="13" r="12" fill="#2272c8" stroke="#0b2a80" strokeWidth="2" />
          <path d="M13 6v6" stroke="#fff" strokeWidth="7" strokeLinecap="round" /><path d="M13 6v6" stroke="#1550b0" strokeWidth="4" strokeLinecap="round" />
          <circle cx="13" cy="20" r="2.500" fill="#1550b0" stroke="#fff" strokeWidth="1.500" />
        </Svg>
        Autosave complete (150 seconds ago)
        <BuildNumber>1.0.0007</BuildNumber>
      </StatusBar>

      <TaskBar>
        <Launchers $end={3}>
          <TaskButton $w={78} aria-label="Start"><Windows /></TaskButton>
          <TaskButton $w={78} aria-label="Cortana"><Cortana /></TaskButton>
          <TaskButton $w={78} aria-label="Task view"><TaskView /></TaskButton>
        </Launchers>
        <Launchers>
          <TaskButton aria-label="Dell"><Dell /></TaskButton>
          <TaskButton aria-label="File Explorer"><Explorer /></TaskButton>
          <TaskButton aria-label="Settings"><Gear /></TaskButton>
          <TaskButton aria-label="Rhino"><Rhino /></TaskButton>
          <TaskButton aria-label="Acrobat"><Acrobat /></TaskButton>
          <Running $stack aria-label="Chrome"><Chrome /></Running>
          <Running aria-label="PowerPoint"><PowerPoint /></Running>
          <Running $active $w={79} aria-label="Rhino 7"><Rhino /></Running>
        </Launchers>
        <Tray>
          <WeatherButton><Weather /><span>18°C</span><span>Mostly sunny</span></WeatherButton>
          {trayIcons.map(([label, shape]) => (
            <TrayButton key={label} aria-label={label}><Svg size={28} box={28}>{shape}</Svg></TrayButton>
          ))}
          <Language>ENG</Language>
          <Notices aria-label="Notifications">
            <Svg size={28} box={28}><path d="M1 2h26v20H14l-5 5v-5H1z" fill="#fff" /><path d="M5 7h18M5 12h18M5 17h12" stroke="#444" strokeWidth="2" /></Svg>
            <Count>3</Count>
          </Notices>
        </Tray>
      </TaskBar>
    </Window>
  )
}

export default App
